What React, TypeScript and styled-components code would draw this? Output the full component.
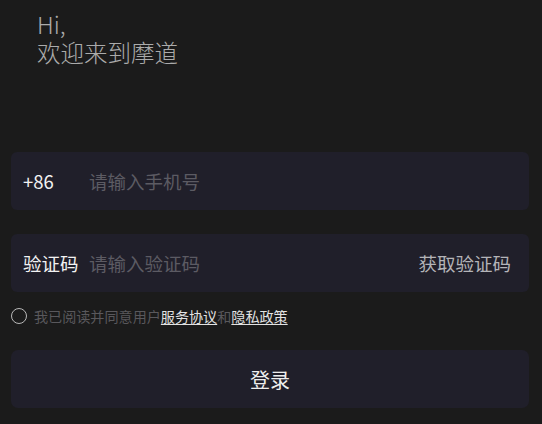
import React from "react";
import styled, { createGlobalStyle } from "styled-components";

const Global = createGlobalStyle`
  html, body { margin: 0; padding: 0; background: #1b1b1b; }
  body { font-family: "Noto Sans CJK SC", "Noto Sans", sans-serif; }
  * { box-sizing: border-box; }
`;

const Page = styled.div`
  width: 542px;
  height: 424px;
  background: #1b1b1b;
  padding: 10px 13px 0 11px;
  display: flex;
  flex-direction: column;
`;

const Greeting = styled.h1`
  margin: 0 0 0 26px;
  font-weight: 300;
  font-size: 23.5px;
  line-height: 28px;
  color: #ababab;
`;

const Fields = styled.div`
  margin-top: 86px;
  display: flex;
  flex-direction: column;
  gap: 24px;
`;

const Field = styled.div`
  height: 58px;
  background: #201f2a;
  border-radius: 6px;
  display: flex;
  align-items: center;
  padding: 0 18px 0 12px;
`;

const Prefix = styled.span<{ $w: number }>`
  width: ${(p) => p.$w}px;
  flex: none;
  font-size: 18.5px;
  color: #f2f2f2;
`;

const Input = styled.input`
  flex: 1;
  min-width: 0;
  background: transparent;
  border: none;
  outline: none;
  padding: 0;
  font-family: inherit;
  font-size: 18.5px;
  color: #eee;
  &::placeholder { color: #5c5b63; }
`;

const CodeBtn = styled.span`
  font-size: 18.5px;
  color: #b4b4b8;
`;

const Agree = styled.div`
  margin-top: 14px;
  display: flex;
  align-items: center;
  gap: 7px;
  font-size: 14.1px;
  color: #59585c;
  line-height: 20px;
`;

const Circle = styled.span`
  width: 16px;
  height: 16px;
  border-radius: 50%;
  border: 1.5px solid #b8b8b8;
  flex: none;
`;

const Link = styled.a`
  color: #e2e2e2;
  text-decoration: underline;
  text-underline-offset: 2px;
`;

const Login = styled.button`
  margin-top: 24px;
  height: 58px;
  border: none;
  border-radius: 7px;
  background: #201f2a;
  color: #eeeeee;
  font-family: inherit;
  font-size: 20px;
`;

export default function App() {
  return (
    <>
      <Global />
      <Page>
        <Greeting>
          Hi,
          <br />
          欢迎来到摩道
        </Greeting>
        <Fields>
          <Field>
            <Prefix $w={66}>+86</Prefix>
            <Input placeholder="请输入手机号" />
          </Field>
          <Field>
            <Prefix $w={66}>验证码</Prefix>
            <Input placeholder="请输入验证码" />
            <CodeBtn>获取验证码</CodeBtn>
          </Field>
        </Fields>
        <Agree>
          <Circle />
          <span>
            我已阅读并同意用户<Link>服务协议</Link>和<Link>隐私政策</Link>
          </span>
        </Agree>
        <Login>登录</Login>
      </Page>
    </>
  );
}
